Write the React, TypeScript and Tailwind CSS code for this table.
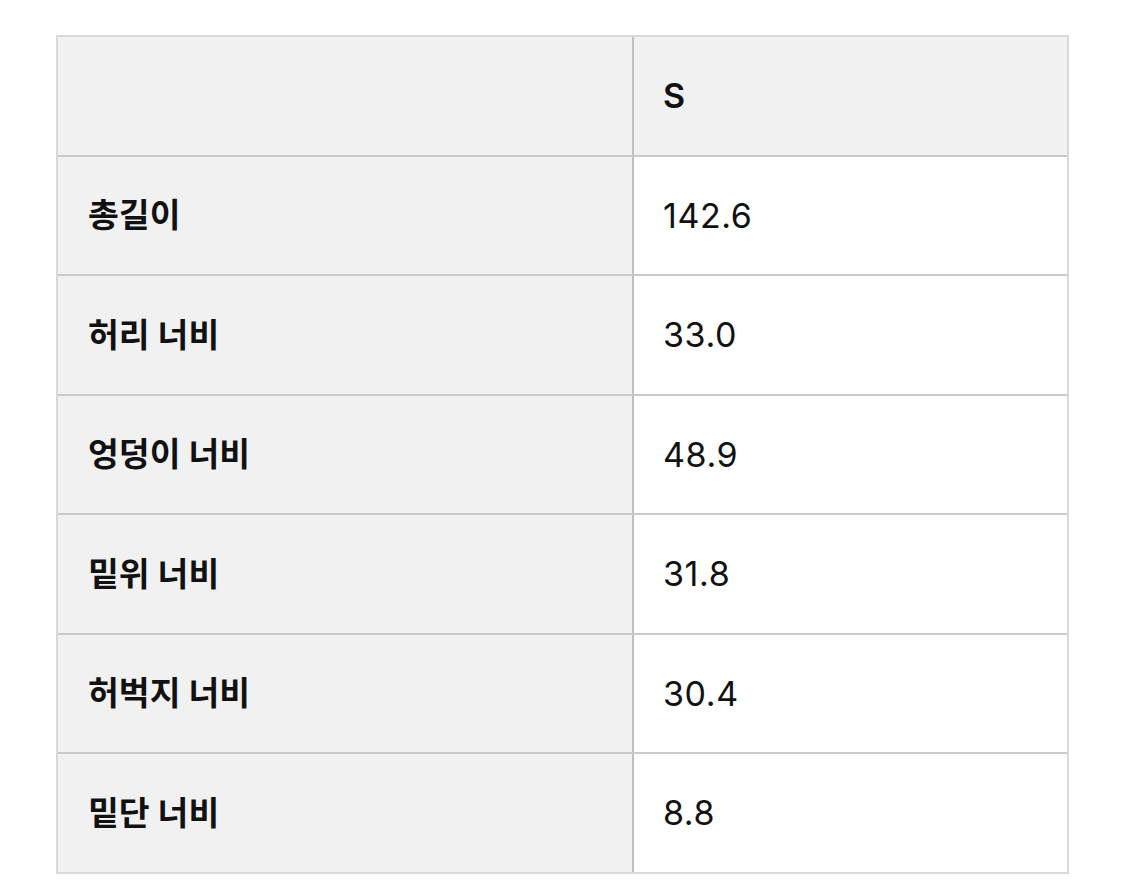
import React from 'react'

const rows = [
  { label: '총길이', value: '142.6' },
  { label: '허리 너비', value: '33.0' },
  { label: '엉덩이 너비', value: '48.9' },
  { label: '밑위 너비', value: '31.8' },
  { label: '허벅지 너비', value: '30.4' },
  { label: '밑단 너비', value: '8.8' },
]

export default function App() {
  return (
    <div
      className="min-h-[881px] bg-white pl-[56px] pt-[35px] text-[#111111]"
      style={{ fontFamily: 'Inter, "Noto Sans CJK KR", sans-serif' }}
    >
      <div className="w-[1013px] border-2 border-[#d9d9d9]">
        {/* header */}
        <div className="flex h-[117.5px]">
          <div className="w-[576px] shrink-0 border-r-2 border-[#bfbfbf] bg-[#f1f1f1]" />
          <div className="flex flex-1 items-center bg-[#f1f1f1] pl-[29px] text-[34px] font-semibold">
            S
          </div>
        </div>
        {rows.map(row => (
          <div key={row.label} className="flex h-[119.5px] border-t-2 border-[#cacaca]">
            <div className="flex w-[576px] shrink-0 items-center border-r-2 border-[#bfbfbf] bg-[#f1f1f1] pl-[30px] text-[33.5px] font-bold">
              {row.label}
            </div>
            <div className="flex flex-1 items-center bg-white pl-[29px] text-[34px] tracking-[0.6px]">
              {row.value}
            </div>
          </div>
        ))}
      </div>
    </div>
  )
}
